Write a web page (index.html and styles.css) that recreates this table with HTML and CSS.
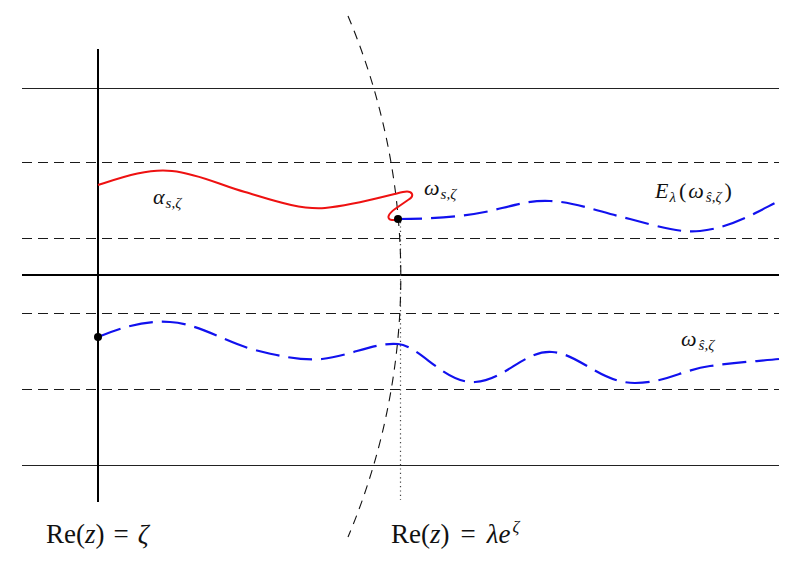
FILE: index.html
```html
<!DOCTYPE html>
<html>
<head>
<meta charset="utf-8">
<link rel="stylesheet" href="styles.css">
</head>
<body>
<div class="figure">
<svg class="diagram" width="808" height="571" viewBox="0 0 808 571" xmlns="http://www.w3.org/2000/svg">
  <!-- horizontal lines -->
  <line class="thin" x1="22" y1="88.5" x2="779" y2="88.5"/>
  <line class="thin" x1="22" y1="465.5" x2="779" y2="465.5"/>
  <line class="thick" x1="22" y1="275" x2="779" y2="275"/>
  <line class="dash" x1="22" y1="162.5" x2="779" y2="162.5"/>
  <line class="dash" x1="22" y1="238.5" x2="779" y2="238.5"/>
  <line class="dash" x1="22" y1="313.5" x2="779" y2="313.5"/>
  <line class="dash" x1="22" y1="389.5" x2="779" y2="389.5"/>
  <!-- vertical line Re(z)=zeta -->
  <line class="thick" x1="98" y1="49" x2="98" y2="502"/>
  <!-- dotted vertical -->
  <line class="dot" x1="400.5" y1="222" x2="400.5" y2="500"/>
  <!-- arc -->
  <path class="arc" d="M348,16 A669,669 0 0 1 348,537"/>
  <!-- red curve -->
  <path class="red" d="M98,185 C120,178 148,168 172,171 C200,174 222,186 245,192 C272,200 300,210 325,208 C355,205 385,196 403,192 C413,190 415,196 408,200 L395,209 C388,214 386,219 392,220 L398,220"/>
  <!-- upper blue -->
  <path class="blue" d="M398,219 C430,219 462,217 490,211 C515,205 530,200 550,201 C575,202 600,212 630,219 C660,227 680,233 700,231 C730,228 755,213 779,201"/>
  <!-- lower blue -->
  <path class="blue" d="M98,337 C120,328 145,320 170,322 C200,324 225,342 255,350 C280,356 300,361 322,359 C350,356 375,342 398,344 C420,346 445,384 475,382 C505,380 525,350 552,352 C580,354 600,383 635,383 C665,383 682,370 710,366 C740,362 760,361 779,359"/>
  <!-- dots -->
  <circle class="pt" cx="398" cy="219" r="4"/>
  <circle class="pt" cx="98" cy="337" r="4"/>
  <!-- labels -->
  <text class="lbl" x="153" y="204"><tspan class="it">α</tspan><tspan class="sub it" dx="1" dy="4">s,ζ</tspan></text>
  <text class="lbl" x="424" y="195"><tspan class="it">ω</tspan><tspan class="sub it" dx="1" dy="4">s,ζ</tspan></text>
  <text class="lbl" x="655" y="198"><tspan class="it">E</tspan><tspan class="sub it" dx="1" dy="4">λ</tspan><tspan dx="3" dy="-4">(</tspan><tspan class="it" dx="2">ω</tspan><tspan class="sub it" dx="2" dy="4">ŝ,ζ</tspan><tspan dx="3" dy="-4">)</tspan></text>
  <text class="lbl" x="681" y="346"><tspan class="it">ω</tspan><tspan class="sub it" dx="2" dy="4">ŝ,ζ</tspan></text>
  <text class="big" x="46" y="543">Re(<tspan class="it">z</tspan>)<tspan dx="9">=</tspan><tspan class="it" dx="9">ζ</tspan></text>
  <text class="big" x="391" y="543">Re(<tspan class="it">z</tspan>)<tspan dx="11">=</tspan><tspan class="it" dx="11">λe</tspan><tspan class="sup it" dx="2" dy="-11">ζ</tspan></text>
</svg>
</div>
</body>
</html>
```
FILE: styles.css
```css
html, body {
  margin: 0;
  padding: 0;
  background: #ffffff;
}
.figure {
  width: 808px;
  height: 571px;
  overflow: hidden;
}
.diagram {
  display: block;
}
.thin {
  stroke: #222222;
  stroke-width: 1;
}
.thick {
  stroke: #000000;
  stroke-width: 2;
}
.dash {
  stroke: #1a1a1a;
  stroke-width: 1;
  stroke-dasharray: 10 6;
}
.dot {
  stroke: #444444;
  stroke-width: 1.2;
  stroke-dasharray: 1.2 3.2;
}
.arc {
  fill: none;
  stroke: #111111;
  stroke-width: 1.1;
  stroke-dasharray: 9 7;
}
.red {
  fill: none;
  stroke: #ee1111;
  stroke-width: 2;
}
.blue {
  fill: none;
  stroke: #1111ee;
  stroke-width: 2.2;
  stroke-dasharray: 24 9;
}
.pt {
  fill: #000000;
}
.lbl {
  font-family: "Liberation Serif", "DejaVu Serif", serif;
  font-size: 22px;
  fill: #111111;
}
.big {
  font-family: "Liberation Serif", "DejaVu Serif", serif;
  font-size: 27px;
  fill: #111111;
}
.it {
  font-style: italic;
}
.sub {
  font-size: 15px;
}
.sup {
  font-size: 17px;
}
```
